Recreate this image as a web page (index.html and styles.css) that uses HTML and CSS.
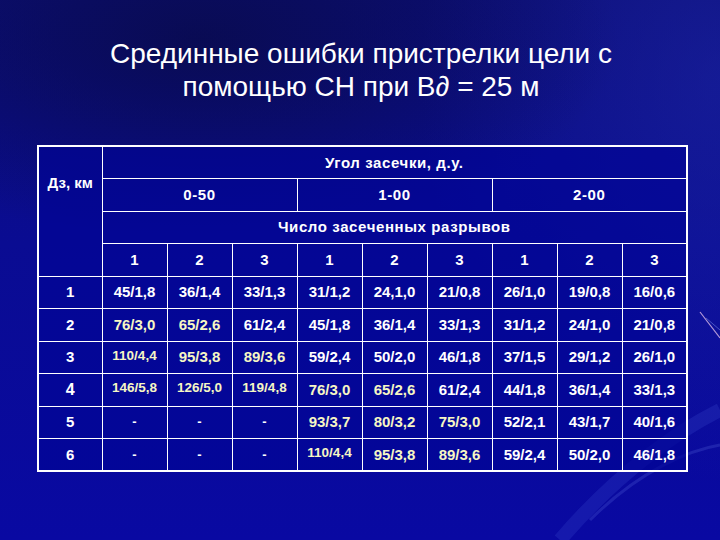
FILE: index.html
```html
<!DOCTYPE html>
<html lang="ru">
<head>
<meta charset="utf-8">
<link rel="stylesheet" href="styles.css">
</head>
<body>
<div class="slide">
  <svg class="streaks" width="720" height="540" viewBox="0 0 720 540">
    <path d="M700 312 L720 338" stroke="#b59ad8" stroke-width="1.2" fill="none"/>
    <path d="M706 318 L720 330" stroke="#6f7fe0" stroke-width="1" fill="none" opacity="0.6"/>
    <path d="M560 540 C 620 470 680 430 720 410" stroke="#3a4ad0" stroke-width="14" fill="none" opacity="0.25"/>
    <path d="M590 520 C 640 470 690 450 720 445" stroke="#5a6ae0" stroke-width="3" fill="none" opacity="0.25"/>
  </svg>
  <h1 class="title">Срединные ошибки пристрелки цели с<br>помощью СН при В∂ = 25 м</h1>
  <table class="grid">
    <colgroup>
      <col class="c0"><col class="c"><col class="c"><col class="c"><col class="c"><col class="c"><col class="c"><col class="c"><col class="c"><col class="c">
    </colgroup>
    <thead>
      <tr><th rowspan="4" class="dz">Дз, км</th><th colspan="9" class="hd">Угол засечки, д.у.</th></tr>
      <tr><th colspan="3" class="hd">0-50</th><th colspan="3" class="hd">1-00</th><th colspan="3" class="hd">2-00</th></tr>
      <tr><th colspan="9" class="hd">Число засеченных разрывов</th></tr>
      <tr><th>1</th><th>2</th><th>3</th><th>1</th><th>2</th><th>3</th><th>1</th><th>2</th><th>3</th></tr>
    </thead>
    <tbody>
      <tr><th>1</th><td>45/1,8</td><td>36/1,4</td><td>33/1,3</td><td>31/1,2</td><td>24,1,0</td><td>21/0,8</td><td>26/1,0</td><td>19/0,8</td><td>16/0,6</td></tr>
      <tr><th>2</th><td class="y">76/3,0</td><td class="y">65/2,6</td><td>61/2,4</td><td>45/1,8</td><td>36/1,4</td><td>33/1,3</td><td>31/1,2</td><td>24/1,0</td><td>21/0,8</td></tr>
      <tr><th>3</th><td class="y s">110/4,4</td><td class="y">95/3,8</td><td class="y">89/3,6</td><td>59/2,4</td><td>50/2,0</td><td>46/1,8</td><td>37/1,5</td><td>29/1,2</td><td>26/1,0</td></tr>
      <tr><th class="big">4</th><td class="y s">146/5,8</td><td class="y s">126/5,0</td><td class="y s">119/4,8</td><td class="y">76/3,0</td><td class="y">65/2,6</td><td>61/2,4</td><td>44/1,8</td><td>36/1,4</td><td>33/1,3</td></tr>
      <tr><th>5</th><td class="dash">-</td><td class="dash">-</td><td class="dash">-</td><td class="y">93/3,7</td><td class="y">80/3,2</td><td class="y">75/3,0</td><td>52/2,1</td><td>43/1,7</td><td>40/1,6</td></tr>
      <tr><th>6</th><td class="dash">-</td><td class="dash">-</td><td class="dash">-</td><td class="y s">110/4,4</td><td class="y">95/3,8</td><td class="y">89/3,6</td><td>59/2,4</td><td>50/2,0</td><td>46/1,8</td></tr>
    </tbody>
  </table>
</div>
</body>
</html>
```
FILE: styles.css
```css
html, body {
  margin: 0;
  padding: 0;
  background: #0a0c8c;
}
.slide {
  position: relative;
  width: 720px;
  height: 540px;
  overflow: hidden;
  background:
    radial-gradient(ellipse 420px 200px at 200px 40px, rgba(8,10,70,0.75), rgba(8,10,70,0) 100%),
    radial-gradient(ellipse 300px 400px at 720px 80px, rgba(30,40,170,0.5), rgba(30,40,170,0) 100%),
    linear-gradient(180deg, #0c0e78 0%, #0a0c92 45%, #0909a2 100%);
  font-family: "Liberation Sans", Arial, sans-serif;
  color: #ffffff;
  display: flex;
  flex-direction: column;
  align-items: flex-start;
}
.streaks {
  position: absolute;
  left: 0;
  top: 0;
  pointer-events: none;
}
.title {
  position: relative;
  align-self: center;
  margin: 37px 0 0 2px;
  font-weight: normal;
  font-size: 28px;
  line-height: 33px;
  text-align: center;
  color: #ffffff;
  letter-spacing: 0;
}
.grid {
  position: relative;
  margin: 42px 0 0 37px;
  border-collapse: collapse;
  table-layout: fixed;
  width: 649px;
  border: 2px solid #ffffff;
  background: rgba(2, 4, 150, 0.7);
}
.c0 { width: 64px; }
.c { width: 65px; }
.grid tr { height: 32.5px; }
.grid th, .grid td {
  border: 1px solid #ffffff;
  padding: 0;
  line-height: 16px;
  text-align: center;
  vertical-align: middle;
  font-weight: bold;
  font-size: 15px;
  color: #ffffff;
  white-space: nowrap;
}
.grid .hd {
  font-size: 15px;
  letter-spacing: 0.6px;
}
.grid .dz {
  vertical-align: top;
  padding-top: 28px;
  font-size: 15px;
}
.grid td.y { color: #f6f6c4; }
.grid td.s {
  font-size: 13.5px;
  vertical-align: top;
  padding-top: 6px;
}
.grid td.dash { font-size: 13px; }
.grid th.big { font-size: 16px; }
```
